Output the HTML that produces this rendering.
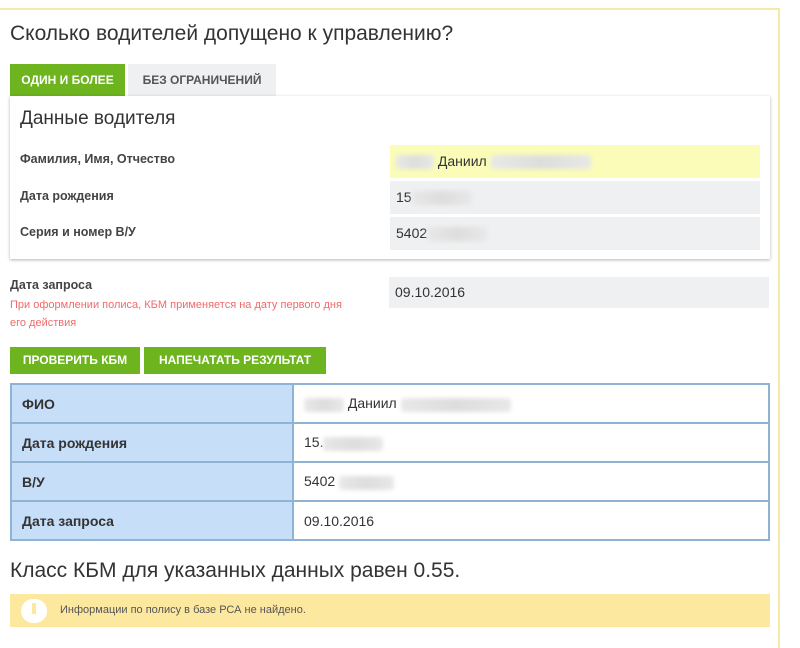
<!DOCTYPE html>
<html><head><meta charset="utf-8"><style>
*{margin:0;padding:0;box-sizing:border-box}
body{width:800px;height:635px;background:#fff;font-family:"Liberation Sans",sans-serif;position:relative;overflow:hidden;color:#333}
.abs{position:absolute}
.frame{left:0;top:8px;width:780px;height:640px;border-top:2px solid #f5e9a8;border-right:2px solid #f5e9a8}
h1{position:absolute;left:10px;top:22px;font-size:21px;font-weight:normal;color:#333}
.tab{top:64px;height:32px;font-size:12px;font-weight:bold;line-height:32px;text-align:center}
.panel{left:10px;top:96px;width:760px;height:163px;background:#fff;box-shadow:0 1px 3px rgba(0,0,0,.3)}
.lbl{font-size:12.5px;font-weight:bold;color:#444}
.inp{left:390px;width:370px;height:33px;background:#eef0f1;font-size:14px;line-height:33px;padding-left:6px;color:#333}
.blur{display:inline-block;height:14px;vertical-align:middle;background:linear-gradient(90deg,#e8e8e8,#ddd,#e8e8e8);border-radius:3px;filter:blur(2px)}
.btn{top:347px;height:27px;background:#6db41f;color:#fff;font-size:12px;font-weight:bold;line-height:27px;text-align:center}
table{position:absolute;left:10px;top:383px;width:760px;height:158px;border-collapse:collapse}
td{border:2px solid #8fb3d3;height:39px;font-size:14px;padding-left:10px}
td.l{width:282px;background:#c6def8;font-weight:bold;color:#333}
</style></head><body>
<div class="abs frame"></div>
<h1>Сколько водителей допущено к управлению?</h1>
<div class="abs tab" style="left:10px;width:115px;background:#6db41f;color:#fff">ОДИН И БОЛЕЕ</div>
<div class="abs tab" style="left:128px;width:148px;background:#eef0f1;color:#555">БЕЗ ОГРАНИЧЕНИЙ</div>
<div class="abs panel"></div>
<div class="abs" style="left:20px;top:108px;font-size:19px;color:#333">Данные водителя</div>
<div class="abs lbl" style="left:20px;top:152px">Фамилия, Имя, Отчество</div>
<div class="abs lbl" style="left:20px;top:189px">Дата рождения</div>
<div class="abs lbl" style="left:20px;top:225px">Серия и номер В/У</div>
<div class="abs inp" style="top:145px;background:#fafcb8"><span class="blur" style="width:38px"></span> Даниил <span class="blur" style="width:100px"></span></div>
<div class="abs inp" style="top:181px">15<span class="blur" style="width:60px"></span></div>
<div class="abs inp" style="top:217px">5402<span class="blur" style="width:60px"></span></div>
<div class="abs lbl" style="left:10px;top:278px">Дата запроса</div>
<div class="abs" style="left:10px;top:296px;font-size:11px;color:#ef6b6b;line-height:18px;width:345px">При оформлении полиса, КБМ применяется на дату первого дня его действия</div>
<div class="abs inp" style="left:389px;top:277px;width:380px;height:31px;line-height:31px">09.10.2016</div>
<div class="abs btn" style="left:10px;width:130px">ПРОВЕРИТЬ КБМ</div>
<div class="abs btn" style="left:144px;width:182px">НАПЕЧАТАТЬ РЕЗУЛЬТАТ</div>
<table>
<tr><td class="l">ФИО</td><td><span class="blur" style="width:40px"></span> Даниил <span class="blur" style="width:110px"></span></td></tr>
<tr><td class="l">Дата рождения</td><td>15.<span class="blur" style="width:60px"></span></td></tr>
<tr><td class="l">В/У</td><td>5402 <span class="blur" style="width:55px"></span></td></tr>
<tr><td class="l">Дата запроса</td><td>09.10.2016</td></tr>
</table>
<div class="abs" style="left:10px;top:559px;font-size:21px;color:#333">Класс КБМ для указанных данных равен 0.55.</div>
<div class="abs" style="left:10px;top:594px;width:760px;height:33px;background:#fde8a0"></div>
<div class="abs" style="left:21px;top:599px;width:26px;height:24px;border-radius:12px;background:#fff"></div>
<div class="abs" style="left:32px;top:603px;width:4px;height:11px;background:#fde8a0"></div>
<div class="abs" style="left:60px;top:604px;font-size:11px;color:#555">Информации по полису в базе РСА не найдено.</div>
</body></html>
